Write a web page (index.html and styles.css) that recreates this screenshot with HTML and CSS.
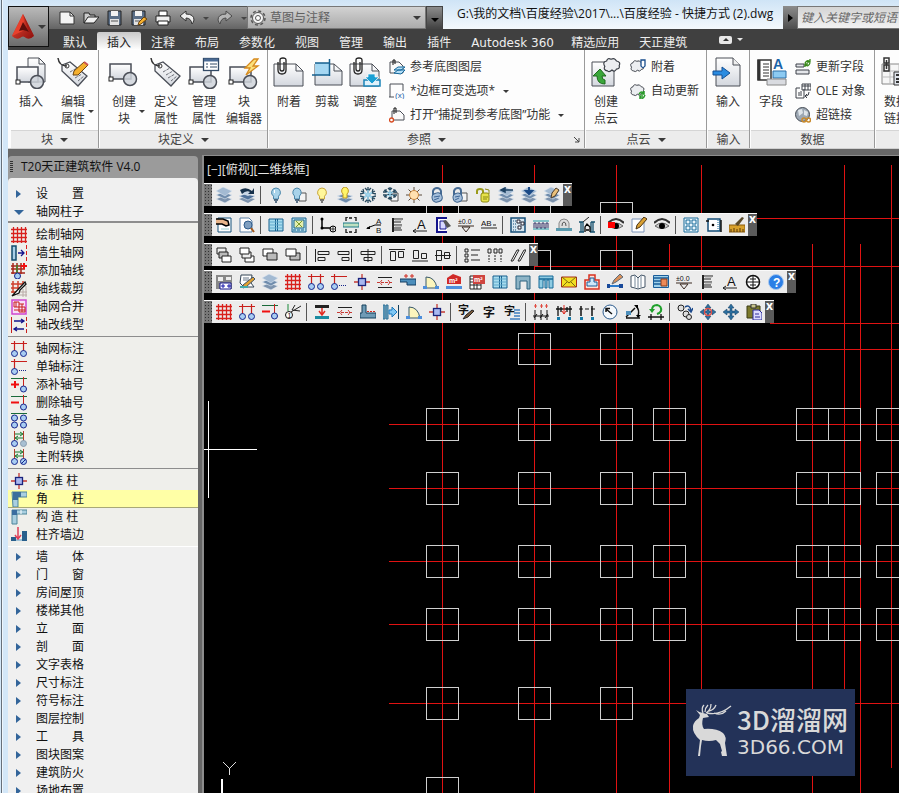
FILE: index.html
```html
<!DOCTYPE html>
<html lang="zh-CN">
<head>
<meta charset="utf-8">
<title>百度经验 - 快捷方式 (2).dwg</title>
<link rel="stylesheet" href="styles.css">
</head>
<body>
<svg class="sprite" aria-hidden="true">
<defs>
<linearGradient id="gPage" x1="0" y1="0" x2="0" y2="1"><stop offset="0" stop-color="#fff"/><stop offset="1" stop-color="#d3d7de"/></linearGradient>
<linearGradient id="gRed" x1="0" y1="0" x2="1" y2="1"><stop offset="0" stop-color="#f0503a"/><stop offset="1" stop-color="#8c0f0c"/></linearGradient>

<!-- toolbar icons, 16 x 16 -->
<symbol id="layers" viewBox="0 0 16 16"><path d="M0 12l7-3 9 3-7 4z" fill="#7d93ad" stroke="#e8eef5" stroke-width=".6"/><path d="M0 8l7-3 9 3-7 4z" fill="#6f8cac" stroke="#e8eef5" stroke-width=".6"/><path d="M0 4l7-4 9 4-7 5z" fill="#a3bad2" stroke="#dfe8f1" stroke-width=".6"/></symbol>
<symbol id="layerswap" viewBox="0 0 16 16"><path d="M0 12l6-2 10 2-7 4z" fill="#7d93ad"/><path d="M0 9l6-2 10 2-7 4z" fill="#4f719a" stroke="#dfe8f1" stroke-width=".6"/><path d="M1 6l6-2 8 2-6 3z" fill="#c8d6e6"/><path d="M1 3q6-4 12 1l2-3v6H9l2-2Q7 3 3 7z" fill="#16304a"/></symbol>
<symbol id="bulb" viewBox="0 0 16 16"><path d="M8 1a4.500 4.500 0 0 0-2.500 8.200V12h5V9.200A4.500 4.500 0 0 0 8 1z" fill="#a8d3ea" stroke="#4a86aa"/><path d="M6 13h4M7 15h2" stroke="#2c4a66" stroke-width="1.500"/><path d="M6.500 3v3" stroke="#fff"/></symbol>
<symbol id="bulbsq" viewBox="0 0 16 16"><path d="M8 6h7v8H8z" fill="#f4f4f4" stroke="#555"/><path d="M6 1a4.500 4.500 0 0 0-2.500 8v3h5V9A4.500 4.500 0 0 0 6 1z" fill="#a8d3ea" stroke="#4a86aa"/><path d="M4 13h4M5 15h2" stroke="#2c4a66" stroke-width="1.500"/></symbol>
<symbol id="bulby" viewBox="0 0 16 16"><path d="M8 1a4.500 4.500 0 0 0-2.500 8.200V12h5V9.200A4.500 4.500 0 0 0 8 1z" fill="#fff79a" stroke="#c9a63c"/><path d="M6 13h4M7 15h2" stroke="#555" stroke-width="1.500"/></symbol>
<symbol id="bulblay" viewBox="0 0 16 16"><path d="M0 9l7-2 9 2-7 3zM0 12l7-2 9 2-7 4z" fill="#6f8cac" stroke="#e4edf5" stroke-width=".6"/><path d="M8 0a4 4 0 0 0-2 7v4h4V7A4 4 0 0 0 8 0z" fill="#fff569" stroke="#c09a22"/></symbol>
<symbol id="snow" viewBox="0 0 16 16"><path d="M8 0v16M1 4l14 8M1 12l14-8M5 1l3 3 3-3M5 15l3-3 3 3M0 7l4-1-1-4M16 7l-4-1 1-4M0 9l4 1-1 4M16 9l-4 1 1 4" fill="none" stroke="#27495f" stroke-width="1.300"/><path d="M8 3v10M4 5.500l8 5M4 10.500l8-5" stroke="#9fd6ee" stroke-width="1.500"/></symbol>
<symbol id="snowsq" viewBox="0 0 16 16"><path d="M8 6h7v8H8z" fill="#f4f4f4" stroke="#555"/><path d="M7 0v13M1 3l12 7M1 10l12-7M5 1l2 2 2-2M5 12l2-2 2 2M0 5l3 0V2M0 8h3v3M14 5h-3V2M14 8h-3v3" fill="none" stroke="#27495f" stroke-width="1.300"/><path d="M7 3v7M4 5l6 4M4 9l6-4" stroke="#9fd6ee" stroke-width="1.500"/></symbol>
<symbol id="sun" viewBox="0 0 16 16"><path d="M8 0v16M0 8h16M2.500 2.500l11 11M13.500 2.500l-11 11" stroke="#5a4a3a"/><circle cx="8" cy="8" r="4.500" fill="#ffe0b0" stroke="#c8863f"/></symbol>
<symbol id="lock" viewBox="0 0 16 16"><path d="M4 9V4q1-3 4-3t4 3v4" fill="none" stroke="#456a93" stroke-width="2"/><rect x="3" y="6" width="10" height="9" rx="4" fill="#a5bfdb" stroke="#3a608b" transform="rotate(-15 8 10)"/><path d="M5 10l6-1M5 13l5-2" stroke="#3f6797"/></symbol>
<symbol id="locksq" viewBox="0 0 16 16"><path d="M8 6h7v8H8z" fill="#f4f4f4" stroke="#555"/><path d="M2 9V4q1-3 4-3t3 3v4" fill="none" stroke="#456a93" stroke-width="2"/><rect x="1" y="6" width="9" height="9" rx="4" fill="#a5bfdb" stroke="#3a608b" transform="rotate(-15 6 10)"/><path d="M3 10l5-1M3 13l4-2" stroke="#3f6797"/></symbol>
<symbol id="unlock" viewBox="0 0 16 16"><path d="M2 7V4q0-2 3-2t3 2v4" fill="none" stroke="#9a9a1a" stroke-width="2"/><rect x="6" y="6" width="8" height="9" rx="2" fill="#e6e24a" stroke="#8d8a12"/><path d="M10 2l4 1v4M8 10h5M8 12h4" stroke="#8d8a12" fill="none"/></symbol>
<symbol id="layleft" viewBox="0 0 16 16"><use href="#layers"/><path d="M15 3H6M7 1L3 3l4 2z" stroke="#1d4163" stroke-width="1.500" fill="#1d4163"/></symbol>
<symbol id="laydown" viewBox="0 0 16 16"><use href="#layers"/><path d="M8 0v4M5 4h6L8 7z" stroke="#1b4a86" stroke-width="2" fill="#1b4a86"/></symbol>
<symbol id="laypen" viewBox="0 0 16 16"><use href="#layers"/><path d="M7 11l1-5 4-5 3 2-4 6z" fill="#e9c07a" stroke="#4a3a2a"/></symbol>
<symbol id="handpage" viewBox="0 0 16 16"><path d="M2 1h13v14H2z" fill="#fff" stroke="#14507a"/><path d="M0 2h7l5 2 1 4-3 1-4-2H0" fill="#e8b48a" stroke="#000" stroke-width="1.500"/><path d="M5 12h8" stroke="#9cc"/></symbol>
<symbol id="pagemag" viewBox="0 0 16 16"><path d="M1 1h9l3 3v11H1z" fill="#fff" stroke="#5a7fa5"/><circle cx="9" cy="8" r="4" fill="#7f9fc0" stroke="#2f5c8c"/><path d="M12 11l3 4" stroke="#a55a1c" stroke-width="2"/></symbol>
<symbol id="win" viewBox="0 0 16 16"><path d="M1 2h14v12H1z" fill="#a8dcee" stroke="#17618f"/><path d="M7.500 2v12M9.500 2v12" stroke="#17618f"/><path d="M2 5h12M2 8h12M2 11h12" stroke="#5fa9cc"/></symbol>
<symbol id="winx" viewBox="0 0 16 16"><path d="M1 1h14v14H1z" fill="#b4dfec" stroke="#17618f"/><path d="M3 3h10v8H3z" fill="#e4eeb0" stroke="#17618f"/><path d="M5 4l6 6M11 4l-6 6" stroke="#7c9a2a"/><path d="M2 13h12" stroke="#17618f" stroke-dasharray="3 1"/></symbol>
<symbol id="poly" viewBox="0 0 16 16"><path d="M2 2v9h8" fill="none" stroke="#000" stroke-width="1.500"/><circle cx="2" cy="2" r="1.500"/><circle cx="2" cy="11" r="1.500"/><circle cx="13" cy="12" r="3" fill="#eee" stroke="#000"/><path d="M10 12h6M13 9v6" stroke="#000" stroke-width=".7"/></symbol>
<symbol id="wallf" viewBox="0 0 16 16"><path d="M0 6h16v4H0z" fill="#bfe0c0" stroke="#1d7a8a"/><path d="M5 0H3v4M11 0h2v4M5 16H3v-4M11 16h2v-4M6 1h3M6 15h3" fill="none" stroke="#111" stroke-width="1.300"/></symbol>
<symbol id="arrA" viewBox="0 0 16 16"><path d="M1 11l8-3h6" fill="none" stroke="#000"/><path d="M0 12l4-3v3z"/><text x="10" y="7" font-size="8">A</text><text x="10" y="16" font-size="8">B</text></symbol>
<symbol id="ladder" viewBox="0 0 16 16"><path d="M4 1v14" stroke="#222" stroke-width="2"/><path d="M4 2h10M4 5h8M4 8h9M4 11h8M4 13h9" stroke="#222"/><path d="M6 3h7M6 9h7" stroke="#999"/></symbol>
<symbol id="Aarr" viewBox="0 0 16 16"><text x="5" y="12" font-size="13">A</text><path d="M1 14h14M4 12l-3 2 3 2" fill="none" stroke="#222"/></symbol>
<symbol id="ins" viewBox="0 0 16 16"><path d="M12 1H2v14h10" fill="#fff" stroke="#14148c" stroke-width="2"/><path d="M5 4h6v8H5z" fill="#d8d8ff" stroke="#14148c"/><path d="M8 4l3-1 5 6-4 2z" fill="#555"/></symbol>
<symbol id="level" viewBox="0 0 16 16"><text x="0" y="7" font-size="7">±0.0</text><path d="M0 9h16M4 10h8l-4 5z" fill="none" stroke="#3a2a22"/></symbol>
<symbol id="AB" viewBox="0 0 16 16"><text x="0" y="9" font-size="8">AB</text><path d="M0 11h16M12 8h3" stroke="#222"/></symbol>
<symbol id="sheet" viewBox="0 0 16 16"><path d="M1 1h14v14H1z" fill="#d6e6f0" stroke="#134c77" stroke-width="1.500"/><path d="M3 4h3M3 7h3M3 10h3M3 13h3" stroke="#134c77" stroke-dasharray="1 1"/><path d="M7 3h3v3H7zM11 5h3v3h-3zM8 9h3v3H8z" fill="#fff" stroke="#223"/></symbol>
<symbol id="wave" viewBox="0 0 16 16"><path d="M0 4h16M0 12h16" stroke="#1a9aa5"/><path d="M1 11V6h2v5h2V6h2v5h2V6h2v5h2V6h2v5" fill="none" stroke="#336"/></symbol>
<symbol id="arch" viewBox="0 0 16 16"><path d="M3 12V6q1-4 5-4t5 4v6z" fill="#ddd" stroke="#888"/><path d="M6 9q0-4 2-4t2 4" fill="none" stroke="#555"/><path d="M0 11h16v3H0z" fill="#5a9aae"/></symbol>
<symbol id="door" viewBox="0 0 16 16"><path d="M0 5h4M2 5v10M4 5v10M0 15h5M16 5h-4M14 5v10M12 5v10M16 15h-5" fill="none" stroke="#14506e" stroke-width="1.300"/><path d="M6 15v-5l2-3 3 3v5M7 13h3" fill="none" stroke="#000" stroke-width="1.300"/><path d="M4 5l6-5" fill="none" stroke="#222"/></symbol>
<symbol id="eye" viewBox="0 0 16 16"><path d="M0 6q8-8 16 0" fill="none" stroke="#333" stroke-width="2"/><path d="M1 9q7-6 14 0-7 5-14 0z" fill="#ccc" stroke="#666"/><circle cx="8" cy="9" r="3"/></symbol>
<symbol id="eyered" viewBox="0 0 16 16"><use href="#eye"/><path d="M0 5h7v6H0z" fill="#f00"/></symbol>
<symbol id="note" viewBox="0 0 16 16"><path d="M1 2h12v13H1z" fill="#fff" stroke="#7a93b8"/><path d="M5 12l1-4 7-8 3 2-7 8z" fill="#d9a033" stroke="#4a3314"/></symbol>
<symbol id="grid4" viewBox="0 0 16 16"><path d="M1 1h14v14H1zM3 3h4v4H3zM9 3h4v4H9zM3 9h4v4H3zM9 9h4v4H9z" fill="#eaf5fb" stroke="#176a99"/></symbol>
<symbol id="pagedot" viewBox="0 0 16 16"><path d="M2 2h12v12H2z" fill="#fff" stroke="#134c77" stroke-width="1.500"/><path d="M0 4h3M15 3v12" stroke="#111" stroke-width="1.500"/><circle cx="7" cy="8" r="1.300"/><path d="M12 3v11" stroke="#176a99" stroke-dasharray="1 1"/></symbol>
<symbol id="ruler" viewBox="0 0 16 16"><path d="M0 8h16v7H0z" fill="#d8a12c" stroke="#8a5c10"/><path d="M2 15v-3M5 15v-4M8 15v-3M11 15v-4M14 15v-3" stroke="#5a3a08"/><path d="M6 7l7-7 2 1-6 8z" fill="#5a4a2a"/></symbol>
<symbol id="ov1" viewBox="0 0 16 16"><path d="M1 1h9v6H1z" fill="#eee" stroke="#222"/><path d="M3 5h9v6H3z" fill="#bbb" stroke="#222"/><path d="M6 9h9v6H6z" fill="#fff" stroke="#222"/></symbol>
<symbol id="ov2" viewBox="0 0 16 16"><path d="M6 9h9v6H6z" fill="#fff" stroke="#222"/><path d="M3 5h9v6H3z" fill="#eee" stroke="#222"/><path d="M1 1h9v6H1z" fill="#fff" stroke="#222"/></symbol>
<symbol id="ov3" viewBox="0 0 16 16"><path d="M1 2h10v7H1z" fill="#fff" stroke="#222"/><path d="M5 6h10v7H5z" fill="#bbb" stroke="#222"/></symbol>
<symbol id="ov4" viewBox="0 0 16 16"><path d="M5 6h10v7H5z" fill="#bbb" stroke="#222"/><path d="M1 2h10v7H1z" fill="#fff" stroke="#222"/></symbol>
<symbol id="alL" viewBox="0 0 16 16"><path d="M1.500 2v13M4 4.500h11v3H4zM4 10.500h7v3H4z" fill="none" stroke="#222"/></symbol>
<symbol id="alR" viewBox="0 0 16 16"><path d="M14.500 2v13M1 4.500h11v3H1zM5 10.500h7v3H5z" fill="none" stroke="#222"/></symbol>
<symbol id="alC" viewBox="0 0 16 16"><path d="M8 2v13M1 4.500h14v3H1zM4 10.500h8v3H4z" fill="none" stroke="#222"/></symbol>
<symbol id="alT" viewBox="0 0 16 16"><path d="M0 2.500h16M1.500 4.500h5v9h-5zM9.500 4.500h5v6h-5z" fill="none" stroke="#222"/></symbol>
<symbol id="alB" viewBox="0 0 16 16"><path d="M0 14h16M1.500 3.500h5v8h-5zM9.500 6.500h5v5h-5z" fill="none" stroke="#222"/></symbol>
<symbol id="alM" viewBox="0 0 16 16"><path d="M0 8.500h16M1.500 3.500h5v10h-5zM9.500 5.500h5v6h-5z" fill="none" stroke="#222"/></symbol>
<symbol id="list" viewBox="0 0 16 16"><path d="M1 2h3v3H1zM1 7h3v3H1zM1 12h3v3H1zM7 3h9M7 8h7M7 13h9" fill="none" stroke="#222"/></symbol>
<symbol id="dist" viewBox="0 0 16 16"><path d="M1 2h3v4H1zM7 2h3v4H7zM12 2h3v4h-3z" fill="none" stroke="#222"/><path d="M2 8v7M8 8v7M14 8v7" stroke="#222" stroke-dasharray="2 1"/></symbol>
<symbol id="slash" viewBox="0 0 16 16"><path d="M1 14L7 3h2L3 14zM8 14l6-11h2l-6 11z" fill="#fff" stroke="#222"/></symbol>
<symbol id="setup" viewBox="0 0 16 16"><path d="M0 1h16v14H0z" fill="#888"/><path d="M2 3h5v4H2zM10 3h5v3h-5z" fill="#eee"/><path d="M4 9h11v6H4z" fill="#fff" stroke="#14148c"/><path d="M5 12h4M7 10v4M11 12h4M13 10v4" stroke="#1414aa"/></symbol>
<symbol id="edit" viewBox="0 0 16 16"><path d="M2 1h11l-1 8 3 4H5L1 9z" fill="#fff" stroke="#345"/><path d="M4 4h6M4 6h6" stroke="#678"/><path d="M4 11l10-8 2 2L7 13l-3 1z" fill="#e0a030" stroke="#456"/><path d="M1 13h8" stroke="#4aa" stroke-width="2"/></symbol>
<symbol id="grid" viewBox="0 0 16 16"><path d="M2.500 0v16M6.500 0v16M10.500 0v16M14.500 0v16M0 2.500h16M0 6.500h16M0 10.500h16M0 14.500h16" stroke="#d8201c" stroke-width="1.300"/></symbol>
<symbol id="axes2" viewBox="0 0 16 16"><path d="M0 2.500h16M3.500 0v10M12.500 0v10" stroke="#c8201c" stroke-width="1.200"/><circle cx="3.500" cy="12.500" r="3" fill="#a8cdf2" stroke="#15258c"/><circle cx="12.500" cy="12.500" r="3" fill="#a8cdf2" stroke="#15258c"/></symbol>
<symbol id="axis1" viewBox="0 0 16 16"><path d="M0 2.500h16M3.500 0v10" stroke="#c8201c" stroke-width="1.200"/><circle cx="3.500" cy="12.500" r="3" fill="#a8cdf2" stroke="#15258c"/><path d="M8 11.500h8" stroke="#15258c" stroke-dasharray="1 1"/></symbol>
<symbol id="axplus" viewBox="0 0 16 16"><path d="M0 1.500h16" stroke="#1a6a3a"/><path d="M12.500 0v10" stroke="#c8201c"/><path d="M0 7.500h8M4 4v7" stroke="#f01010" stroke-width="2"/><circle cx="12.500" cy="12" r="3" fill="#a8cdf2" stroke="#15258c"/></symbol>
<symbol id="axminus" viewBox="0 0 16 16"><path d="M0 1.500h16" stroke="#1a6a3a"/><path d="M12.500 0v10" stroke="#c8201c"/><path d="M0 7.500h8" stroke="#f01010" stroke-width="2"/><circle cx="12.500" cy="12" r="3" fill="#a8cdf2" stroke="#15258c"/></symbol>
<symbol id="ax4" viewBox="0 0 16 16"><path d="M0 .5h16" stroke="#1a6a3a"/><g fill="#a8cdf2" stroke="#15258c"><circle cx="3.500" cy="5" r="3"/><circle cx="12.500" cy="5" r="3"/><circle cx="3.500" cy="12" r="3"/><circle cx="12.500" cy="12" r="3"/></g></symbol>
<symbol id="axhide" viewBox="0 0 16 16"><path d="M3.500 0v10M12.500 0v10" stroke="#b0402c"/><path d="M4 3h7M9 1l3 2-3 2M12 7H5M7 5L4 7l3 2" fill="none" stroke="#127a2c"/><circle cx="3.500" cy="12.500" r="3" fill="#a8cdf2" stroke="#15258c"/><circle cx="12.500" cy="12.500" r="3" fill="#a9c0d2" stroke="#8a9cae"/></symbol>
<symbol id="axswap" viewBox="0 0 16 16"><path d="M3.500 0v10M12.500 0v10" stroke="#b0402c"/><path d="M4 3h7M9 1l3 2-3 2M12 7H5M7 5L4 7l3 2" fill="none" stroke="#127a2c"/><circle cx="3.500" cy="12.500" r="3" fill="#a8cdf2" stroke="#15258c"/><circle cx="12.500" cy="12.500" r="3" fill="#a8cdf2" stroke="#15258c"/><path d="M10 15l5-5" stroke="#15258c"/></symbol>
<symbol id="cross" viewBox="0 0 16 16"><path d="M0 8h16M8 0v16" stroke="#c43a34" stroke-width="1.300"/><rect x="4.500" y="4.500" width="7" height="7" fill="#a9b8f0" stroke="#1a237c" stroke-width="1.300"/></symbol>
<symbol id="dim" viewBox="0 0 16 16"><path d="M1 3.500h14M1 13.500h14" stroke="#222"/><path d="M0 8.500h16M5 6L3 8.500 5 11M11 6l2 2.500L11 11" fill="none" stroke="#c83a34" stroke-dasharray="3 1"/></symbol>
<symbol id="wall" viewBox="0 0 16 16"><path d="M0 5h16v6H7V8H0z" fill="#4d8fbc" stroke="#143c60"/><path d="M6 0v4M12 0v4M4 2h4M10 2h4" stroke="#d02a20"/></symbol>
<symbol id="arc" viewBox="0 0 16 16"><path d="M3 14V3q9 0 11 11z" fill="#fdf6bd" stroke="#3a5a6a"/><path d="M0 12h4v3H0zM12 12h4v3h-4z" fill="#4d8fdc"/></symbol>
<symbol id="m2" viewBox="0 0 16 16"><path d="M1 4l6-4 8 3v7H1z" fill="#d02a28"/><text x="3" y="9" font-size="7" class="inv">m²</text><path d="M0 12h16v3H0z" fill="#4d8fdc"/></symbol>
<symbol id="m2t" viewBox="0 0 16 16"><path d="M1 2h11v13H1z" fill="#fff" stroke="#222"/><path d="M1 5h11M1 8h11M1 11h11M5 2v13M8 2v13" stroke="#222"/><path d="M4 1h12v9H4z" fill="#cf4540"/><text x="5" y="8" font-size="7" class="inv">m²</text></symbol>
<symbol id="corner" viewBox="0 0 16 16"><path d="M1 1h15v5H7v10H2z" fill="#a9cfe0" stroke="#4d8599"/><path d="M2 1h8v5H7v3H2z" fill="#3c6f9c"/></symbol>
<symbol id="corner2" viewBox="0 0 16 16"><path d="M1 1h15v4H6v10H1z" fill="#a9cfe0" stroke="#4d8599"/><path d="M1 1h5v5H1z" fill="#3a6ea0"/><path d="M10 1v4" stroke="#fff"/></symbol>
<symbol id="tee" viewBox="0 0 16 16"><path d="M1 2h14v12h-4V6H9v8H7V6H5v8H1z" fill="#8ecbe2" stroke="#176a99"/><path d="M1 5h14" stroke="#176a99" stroke-width="1.500"/></symbol>
<symbol id="portal" viewBox="0 0 16 16"><path d="M1 2h14v13h-3V7H5v8H1z" fill="#8db4c6" stroke="#2a6380"/></symbol>
<symbol id="mail" viewBox="0 0 16 16"><path d="M.5 3h15v10H.5z" fill="#f2df22" stroke="#a83018"/><path d="M1 3l7 6 7-6M1 13l5-5M15 13l-5-5" fill="none" stroke="#7a6a10"/></symbol>
<symbol id="house" viewBox="0 0 16 16"><path d="M5 1h6v5h4v9H1V6h4z" fill="#ffe2d8" stroke="#d83020" stroke-width="1.500"/><path d="M6 8V4h4v4h3v4H3V8z" fill="#cfe6f7" stroke="#1a5d9a"/></symbol>
<symbol id="brush" viewBox="0 0 16 16"><path d="M0 12h16" stroke="#2a7acc" stroke-width="2"/><path d="M0 10h3v4H0zM12 10h4v4h-4z" fill="#1a4a9a"/><path d="M5 10l2-4 6-6 3 3-7 5z" fill="#d8905a" stroke="#5a6a7a"/></symbol>
<symbol id="book" viewBox="0 0 16 16"><path d="M1 2l4-1 3 3 3-3 4 1v11l-4 1-3 1-3-1-4-1z" fill="#fff" stroke="#456"/><path d="M5 1v12M8 4v11M11 1v12" stroke="#789"/></symbol>
<symbol id="table" viewBox="0 0 16 16"><path d="M.5 1.500h15v12H.5z" fill="#9fd0ea" stroke="#1a5d9a"/><path d="M1 4h14M1 7h7M1 10h7" stroke="#1a5d9a" stroke-width="1.500"/><path d="M8 5h6v7H8z" fill="#ee8a58" stroke="#8a3a1a"/></symbol>
<symbol id="wheel" viewBox="0 0 16 16"><circle cx="8" cy="8" r="6.500" fill="#fff" stroke="#111" stroke-width="1.500"/><path d="M1 8h14M8 1v14M5 5h6M5 11h6" stroke="#111"/></symbol>
<symbol id="help" viewBox="0 0 16 16"><circle cx="8" cy="8" r="7.500" fill="#2b7fe6" stroke="#a9c8ee"/><text x="5" y="12.500" font-size="12" class="inv">?</text></symbol>
<symbol id="onearr" viewBox="0 0 16 16"><circle cx="4" cy="11" r="3.500" fill="#fff" stroke="#111"/><text x="2.500" y="14" font-size="7">1</text><path d="M3 0v7" stroke="#1a8a3a"/><path d="M6 8l10-6M10 1L7 6l8 1" fill="none" stroke="#222"/></symbol>
<symbol id="wdown" viewBox="0 0 16 16"><path d="M1 1h14v3H1z" fill="#222"/><path d="M1 12h14v3H1z" fill="#1a8aa0"/><path d="M8 4v6M5 7l3 4 3-4" fill="none" stroke="#e02a20" stroke-width="1.500"/></symbol>
<symbol id="Lwall" viewBox="0 0 16 16"><path d="M2 1h4v8h10v5H0V9h2z" fill="#6f9bb5" stroke="#14405c"/><path d="M7 7.500h9" stroke="#d02a20" stroke-dasharray="2 1"/></symbol>
<symbol id="colarr" viewBox="0 0 16 16"><path d="M0 1h2v14H0zM3 1h2v14H3z" fill="#7ab0cc" stroke="#2c6f94"/><path d="M15.500 1v14" stroke="#14405c"/><path d="M6 6h3V3l5 5-5 5v-3H6z" fill="#7ec7f4" stroke="#1a78bc"/></symbol>
<symbol id="zi" viewBox="0 0 16 16"><text x="2" y="13" font-size="12" font-weight="700">字</text></symbol>
<symbol id="zibr" viewBox="0 0 16 16"><text x="0" y="10" font-size="11" font-weight="700">字</text><path d="M5 15l3-4 6-5 2 1-6 6z" fill="#7a5a3a" stroke="#222"/></symbol>
<symbol id="zil" viewBox="0 0 16 16"><text x="0" y="11" font-size="11" font-weight="700">字</text><path d="M10 6h6M10 9h6M10 12h6M6 15h10" stroke="#3f7fc0" stroke-width="1.500"/></symbol>
<symbol id="d1" viewBox="0 0 16 16"><path d="M0 12h16M2 6v10M8 6v10M14 6v10M1 14l3-4M7 14l3-4M12 14l3-4" stroke="#111"/><path d="M1 2h3M7 2h3M12 2h3M2.500 0v4M8.500 0v4M13.500 0v4" stroke="#e04a40"/></symbol>
<symbol id="d2" viewBox="0 0 16 16"><path d="M0 5h16M2 2v10M14 2v10M5 3v5M11 3v5" stroke="#111" stroke-width="1.300"/><path d="M8 1v9M6 7l2 3 2-3" fill="none" stroke="#e02a20"/><path d="M1 13h3v3H1zM12 13h3v3h-3z" fill="#167aa8"/></symbol>
<symbol id="d3" viewBox="0 0 16 16"><path d="M0 5h16" stroke="#111" stroke-dasharray="4 2"/><path d="M2 2v10M13 2v10" stroke="#111" stroke-width="1.500"/><path d="M1 13h3v3H1zM12 13h3v3h-3z" fill="#167aa8"/></symbol>
<symbol id="clock" viewBox="0 0 16 16"><circle cx="8" cy="8" r="7" fill="#f4f8fc" stroke="#2a5a8c"/><path d="M10 10L4 5M4 8V4.500h4" fill="none" stroke="#111" stroke-width="1.500"/></symbol>
<symbol id="angle" viewBox="0 0 16 16"><path d="M1 14h14M1 13L10 4M11 2q4 4 2 10" fill="none" stroke="#111" stroke-width="1.500"/><path d="M1 7h5v4H1z" fill="#4d8fbc"/><path d="M9 1h4v4zM11 11h5l-3 3z"/></symbol>
<symbol id="redo2" viewBox="0 0 16 16"><path d="M4 6q0-5 5-5 5 1 4 6-1 2-4 3" fill="none" stroke="#1fa02c" stroke-width="2"/><path d="M1 5h6L4 9z" fill="#1fa02c"/><path d="M0 13h16M3 10v6M13 10v6" stroke="#111" stroke-width="1.300"/></symbol>
<symbol id="copies" viewBox="0 0 16 16"><circle cx="4" cy="4" r="3" fill="#ddd" stroke="#222"/><circle cx="9" cy="10" r="3" fill="#ddd" stroke="#222"/><circle cx="12" cy="13" r="2.500" fill="#ddd" stroke="#222"/><path d="M8 3q5-3 6 4M11 5l3 3 2-4" fill="none" stroke="#1c4a8c" stroke-width="1.500"/></symbol>
<symbol id="move" viewBox="0 0 16 16"><path d="M8 0l3 4H9v3h3V5l4 3-4 3V9H9v3h2l-3 4-3-4h2V9H4v2L0 8l4-3v2h3V4H5z" fill="#2c6f9e" stroke="#173f60" stroke-width=".5"/></symbol>
<symbol id="mover" viewBox="0 0 16 16"><use href="#move"/><circle cx="8" cy="8" r="3.500" fill="none" stroke="#e05048" stroke-width="1.500"/></symbol>
<symbol id="paste" viewBox="0 0 16 16"><path d="M1 2h13v12H1z" fill="#7c7a2c" stroke="#3a3a14"/><path d="M5 0h5v4H5z" fill="#c8c48a" stroke="#333"/><path d="M7 6h6l3 3v7H7z" fill="#dcdcff" stroke="#2a2a9a"/><path d="M9 10h4M9 13h5" stroke="#2a2a9a"/></symbol>

<!-- palette-only icons -->
<symbol id="wallgen" viewBox="0 0 16 16"><path d="M1 1h4v14H1z" fill="#a9cfe6" stroke="#134c6e" stroke-width="1.500"/><path d="M7 8h6M10 5l3 3-3 3" fill="none" stroke="#14148c" stroke-width="1.300"/><path d="M15.500 0v16" stroke="#d8201c" stroke-dasharray="4 2"/></symbol>
<symbol id="addline" viewBox="0 0 16 16"><path d="M2 0v11M6 0v11M10 0v11M0 3h16M0 6h14M0 10h14" stroke="#a8281c" stroke-width="1.500"/><path d="M10 3h6M13 0v6" stroke="#f01010" stroke-width="2"/><path d="M6 2v8" stroke="#3a8a2a" stroke-width="1.500"/><circle cx="6.500" cy="13" r="3" fill="#a8cdf2" stroke="#15258c"/></symbol>
<symbol id="trim" viewBox="0 0 16 16"><path d="M2 0v12M7 0v8M12 0v5M0 3h14M0 7h9M0 11h6" stroke="#d0402c" stroke-width="1.500"/><path d="M12 8v8M15 5v11M6 14h10M9 11h7" stroke="#b9aaa6"/><path d="M1 15L14 1l1 2-6 6-1 3z" fill="#fff" stroke="#111" stroke-width="1.300"/></symbol>
<symbol id="merge" viewBox="0 0 16 16"><path d="M1 1h14v14H1z" fill="#f8dff8" stroke="#d048d0" stroke-width="1.500"/><path d="M3 3h5v5H3zM8 8h6v5H8zM5 3v5M11 5v8M3 11h11M8 5h5" fill="none" stroke="#c8201c"/></symbol>
<symbol id="ltype" viewBox="0 0 16 16"><path d="M.5 0v16" stroke="#c8201c"/><path d="M15.500 0v16" stroke="#c8201c" stroke-dasharray="4 2"/><path d="M3 4h9M10 2l3 2-3 2M13 12H4M6 10l-3 2 3 2" fill="none" stroke="#14148c" stroke-width="1.300"/></symbol>
<symbol id="walledge" viewBox="0 0 16 16"><path d="M0 10h5v4H0zM11 4h5v10h-5z" fill="#285f8c"/><path d="M5 12h6v2H5z" fill="#9ec4da"/><path d="M7 0v11M4 8l3 4 3-4" fill="none" stroke="#e04058" stroke-width="1.500"/></symbol>

<!-- ribbon icons -->
<symbol id="block" viewBox="0 0 32 32"><rect x="2" y="7" width="21" height="15" fill="url(#gPage)" stroke="#4a4e57" stroke-width="1.500"/><rect x="1" y="20" width="4" height="4" fill="#fff" stroke="#222"/><circle cx="22" cy="22" r="6.500" fill="#cfd3da" fill-opacity=".85" stroke="#4a4e57" stroke-width="1.500"/></symbol>
<symbol id="tag" viewBox="0 0 32 32"><path d="M5 8l8-3 17 14-9 10L5 14z" fill="url(#gPage)" stroke="#4a4e57" stroke-width="1.300"/><circle cx="10" cy="9" r="2" fill="#fff" stroke="#333"/><path d="M1 1q1 8 9 8" fill="none" stroke="#333" stroke-width="1.500"/><path d="M13 15l7-4M16 18l7-4M18 21l7-4M21 24l6-5" stroke="#6a6e77" stroke-dasharray="3 1"/></symbol>
<symbol id="rInsert" viewBox="0 0 32 32"><path d="M13 1h11l6 6v18H13z" fill="url(#gPage)" stroke="#4a4e57"/><path d="M24 1v6h6" fill="none" stroke="#4a4e57"/><use href="#block" y="3" width="32" height="32"/></symbol>
<symbol id="rTagPen" viewBox="0 0 32 32"><use href="#tag"/><path d="M16 18l1-4L27 5l4 3-10 10z" fill="#f5b02e" stroke="#6a4310"/><path d="M27 5l4 3" stroke="#c55" stroke-width="2"/></symbol>
<symbol id="rManage" viewBox="0 0 32 32"><use href="#block" y="3" width="32" height="32"/><rect x="15.500" y="1.500" width="15" height="12" fill="#fff" stroke="#334a66" stroke-width="1.300"/><path d="M16 3h14" stroke="#4a6a94" stroke-width="3"/><path d="M18 7h2M22 7h7M18 10h2M22 10h7" stroke="#334a66"/></symbol>
<symbol id="rEditor" viewBox="0 0 32 32"><use href="#block" y="3" width="32" height="32"/><path d="M26 2l-9 9h5l-4 7 12-9h-5l5-7z" fill="#fbe07a" stroke="#d68a1e" stroke-width="1.300"/></symbol>
<symbol id="clip" viewBox="0 0 12 18"><path d="M2 5v8q0 4 4 4t4-4V3q0-2-3-2T4 3v9q0 2 2 2t2-2V5" fill="none" stroke="#222" stroke-width="1.300"/></symbol>
<symbol id="rAttach" viewBox="0 0 32 32"><path d="M1 7h22l7 7v15H1z" fill="url(#gPage)" stroke="#4a4e57"/><path d="M23 7v7h7" fill="none" stroke="#4a4e57"/><use href="#clip" x="3" width="12" height="18"/></symbol>
<symbol id="rCrop" viewBox="0 0 32 32"><path d="M4 7h19l8 7v14H4z" fill="url(#gPage)" stroke="#4a4e57"/><path d="M23 7v7h8" fill="none" stroke="#4a4e57"/><path d="M4 6h14v12H4z" fill="#a5d7f2"/><path d="M1 18h18M18.500 2v17M4 6h14" stroke="#16608f" stroke-width="1.500"/></symbol>
<symbol id="rAdjust" viewBox="0 0 32 32"><use href="#rAttach"/><path d="M15 23h16v6H15z" fill="#dff1fb" stroke="#1a84b8" stroke-width="1.500"/><path d="M19 17h7v3h4l-7 7-7-7h3z" fill="#1a9fd4" stroke="#fff" stroke-width=".7"/></symbol>
<symbol id="cloud" viewBox="0 0 20 18"><path d="M5 15q-5-1-3-5-3-5 2-6 1-4 5-2 4-2 6 2 5 1 3 5 1 4-3 4-2 4-5 1-3 3-5 1z" fill="#eceef1" stroke="#3c4048" stroke-width="1.300"/></symbol>
<symbol id="rCloud" viewBox="0 0 32 32"><path d="M2 5h22v24H2z" fill="url(#gPage)" stroke="#4a4e57"/><use href="#cloud" x="13" y="0" width="18" height="17"/><path d="M10 12l-7 7h4q0 8 8 8v-4q-3 0-3-4h4z" fill="#3aa63a" stroke="#1c6a1c"/></symbol>
<symbol id="rImport" viewBox="0 0 32 32"><path d="M4 1h17l7 7v21H4z" fill="url(#gPage)" stroke="#4a4e57"/><path d="M21 1v7h7" fill="#eee" stroke="#4a4e57"/><path d="M1 14h9v-4l8 6-8 6v-4H1z" fill="#2a8be0" stroke="#124f94"/></symbol>
<symbol id="rField" viewBox="0 0 32 32"><path d="M3 3h13v20H3z" fill="#fff" stroke="#333" stroke-width="1.500"/><path d="M4 3v20" stroke="#333" stroke-width="3"/><path d="M8 7h6M8 10h6M8 13h6M8 16h6M8 19h6" stroke="#333"/><text x="18" y="12" font-size="14" font-weight="700" class="blue">A</text><path d="M18 14h13v7H18z" fill="#8ccaf2" stroke="#2a6fa8"/><path d="M12 22h19v6H12z" fill="#d9dbe0" stroke="#888"/></symbol>
<symbol id="rLink" viewBox="0 0 32 32"><path d="M2 7h26v20H2z" fill="#f6f6f6" stroke="#888"/><path d="M2 14h26M2 20h26M10 7v20M19 7v20" stroke="#bbb"/><path d="M4 1h5v5H4zM4 8h5v6H4zM6.500 3v9" fill="none" stroke="#333" stroke-width="1.500"/><path d="M14 15h12v13H14z" fill="#dfe3ea" stroke="#333"/><path d="M16 18h8M16 22h3M21 22h3M16 25h3M21 25h3" stroke="#333" stroke-width="2"/></symbol>
<symbol id="sUnder" viewBox="0 0 16 16"><path d="M1 3h9l4 4v7H1z" fill="#fafafa" stroke="#4a4e57"/><path d="M4 6V1h2v4" fill="none" stroke="#111"/><path d="M5 11l4-3h7l-4 3zM5 14l4-3h7l-4 4z" fill="#b4def6" stroke="#14689c"/></symbol>
<symbol id="sFrame" viewBox="0 0 16 16"><path d="M1 14V1h13v7" fill="none" stroke="#4a4e57"/><path d="M0 14h5" stroke="#4a4e57"/><text x="6" y="15" font-size="8" class="blue">(x)</text></symbol>
<symbol id="sSnap" viewBox="0 0 16 16"><path d="M3 4h8l4 4v5H3z" fill="#fafafa" stroke="#4a4e57"/><path d="M5 7V1h2v5" fill="none" stroke="#111"/><circle cx="2.500" cy="13" r="2" fill="#fff" stroke="#d84a20" stroke-width="1.300"/></symbol>
<symbol id="sCloudA" viewBox="0 0 16 16"><use href="#cloud" width="15" height="15"/><path d="M11 1v6q2 3 4 0V1z" fill="#fff" stroke="#174c8c" stroke-width="1.300"/></symbol>
<symbol id="sCloudU" viewBox="0 0 16 16"><use href="#cloud" width="15" height="15"/><path d="M9 11q3-4 5 0M15 12q-2 5-5 2M14 8v3h-3M10 16v-3h3" fill="none" stroke="#2a9a2a" stroke-width="1.500"/></symbol>
<symbol id="sUpd" viewBox="0 0 16 16"><path d="M1 5h8v3H1zM1 11h13v4H1z" fill="#e4e6ea" stroke="#3c4048"/><path d="M10 4q3-4 5-1M15 4q-2 5-5 1M15 0v3h-3M10 8V5h3" fill="none" stroke="#3a8a1a" stroke-width="1.300"/></symbol>
<symbol id="sOle" viewBox="0 0 16 16"><path d="M7 1h9v6H7z" fill="#fff" stroke="#3c4048"/><path d="M7 3h9M10 1v6M13 1v6M1 5h4M1 5v10h8V6M4 13V9M6 13V8" fill="none" stroke="#3c4048"/><path d="M14 9q0 4-3 4M12 11l-2 2 2 2" fill="none" stroke="#3c4048"/></symbol>
<symbol id="sHyper" viewBox="0 0 16 16"><circle cx="7.500" cy="7.500" r="7" fill="#9da8b4" stroke="#454c55"/><path d="M3 3l4-1 1 4-4 3zM9 3l4 2-1 4-3-1z" fill="#dfe5ea"/><circle cx="9" cy="13" r="2" fill="none" stroke="#c98a2c" stroke-width="1.500"/><circle cx="13.500" cy="13" r="2" fill="none" stroke="#c98a2c" stroke-width="1.500"/></symbol>

<!-- quick access icons -->
<symbol id="qNew" viewBox="0 0 16 16"><path d="M1 2h10l4 4v8H1z" fill="#f4f4f4" stroke="#333"/><path d="M11 2v4h4" fill="none" stroke="#333"/></symbol>
<symbol id="qOpen" viewBox="0 0 16 16"><path d="M1 13V3h5l1 2h5v2" fill="#ccc" stroke="#222"/><path d="M1 13l4-6h11l-5 6z" fill="#f0f0f0" stroke="#222"/></symbol>
<symbol id="qSave" viewBox="0 0 16 16"><path d="M1 1h13v14H1z" fill="#5b6f88" stroke="#222"/><path d="M4 1h7v5H4z" fill="#f2f2f2"/><path d="M3 9h9v6H3z" fill="#e2e2e2"/><path d="M4 11h7" stroke="#555"/></symbol>
<symbol id="qSaveAs" viewBox="0 0 16 16"><use href="#qSave"/><path d="M7 15l1-3 5-5 3 2-6 5z" fill="#f5b02e" stroke="#6a4310"/></symbol>
<symbol id="qPrint" viewBox="0 0 16 16"><path d="M4 1h8v5H4z" fill="#fff" stroke="#222"/><path d="M1 6h14v6H1z" fill="#eee" stroke="#222"/><path d="M3 11h10v4H3z" fill="#fff" stroke="#222"/></symbol>
<symbol id="qUndo" viewBox="0 0 16 16"><path d="M1 6l6-5v3q8 0 8 6-1 3-2 4-1-6-6-6v3z" fill="#eee" stroke="#333"/></symbol>
<symbol id="qRedo" viewBox="0 0 16 16"><path d="M15 6L9 1v3Q1 4 1 10q1 3 2 4 1-6 6-6v3z" fill="#b5b5b5" stroke="#4a4a4a"/></symbol>
<symbol id="gear" viewBox="0 0 16 16"><circle cx="8" cy="8" r="7" fill="none" stroke="#555" stroke-width="1.500" stroke-dasharray="3 2.500"/><circle cx="8" cy="8" r="5.500" fill="#f4f4f4" stroke="#555"/><circle cx="8" cy="8" r="2.500" fill="#fff" stroke="#555"/></symbol>

<symbol id="logo" viewBox="0 0 24 26"><path d="M12 0L1 22q4 4 8 2 3-3 6 0 4 2 8-2z" fill="url(#gRed)"/><path d="M12 0l2 16-13 6z" fill="#e8402c"/><path d="M12 8l-4 9q5-2 10 1z" fill="#5d0f0c"/><path d="M12 0l11 22-5-4z" fill="#a01a14"/></symbol>
<symbol id="deer" viewBox="0 0 40 52"><path d="M4 6q4 3 7 3l4 1 2 3-6 1q-2 7 1 11 12-1 19 4 4 4 2 10l2 13h-5l-1-4 1-1-2-7-4-4q-7 2-14 0l-1 6-1 10H6l2-16Q0 29 1 22q1-5 6-8l1-3z"/><path d="M11 9Q9 4 12 1M13 8q0-4 3-7M14 9q5-3 5-9M15 9q12 3 24-7M17 7q5-1 7-6M22 9q7 3 12-2" fill="none" stroke="#d9d9d9" stroke-width="1.300"/></symbol>
</defs>
</svg>

<div class="window">
  <header class="top">
    <button class="app" aria-label="应用程序菜单"><svg class="logo"><use href="#logo"/></svg><span class="caret"></span></button>
    <div class="topmain">
      <div class="titlebar">
        <div class="quick">
          <button aria-label="新建"><svg><use href="#qNew"/></svg></button>
          <button aria-label="打开"><svg><use href="#qOpen"/></svg></button>
          <button aria-label="保存"><svg><use href="#qSave"/></svg></button>
          <button aria-label="另存为"><svg><use href="#qSaveAs"/></svg></button>
          <button aria-label="打印"><svg><use href="#qPrint"/></svg></button>
          <button aria-label="放弃"><svg><use href="#qUndo"/></svg></button>
          <span class="caret dim"></span>
          <button aria-label="重做"><svg><use href="#qRedo"/></svg></button>
          <span class="caret dim"></span>
        </div>
        <div class="workspace"><svg class="i"><use href="#gear"/></svg><select aria-label="工作空间"><option>草图与注释</option></select><span class="caret"></span></div>
        <button class="qmore" aria-label="自定义快速访问工具栏"><span class="caret"></span></button>
        <h1 class="doc">G:\我的文档\百度经验\2017\...\百度经验 - 快捷方式 (2).dwg</h1>
        <button class="expand" aria-label="展开搜索"><span></span></button>
        <input class="search" type="text" aria-label="搜索" placeholder="键入关键字或短语">
      </div>
      <nav class="tabs">
        <a href="#">默认</a><a href="#" class="on">插入</a><a href="#">注释</a><a href="#">布局</a><a href="#">参数化</a><a href="#">视图</a><a href="#">管理</a><a href="#">输出</a><a href="#">插件</a><a href="#" class="latin">Autodesk 360</a><a href="#">精选应用</a><a href="#">天正建筑</a>
        <button class="fold" aria-label="最小化功能区"><span></span></button><span class="caret light"></span>
      </nav>
    </div>
  </header>

  <div class="ribbon">
    <section class="panel">
      <div class="body">
        <button class="big"><svg><use href="#rInsert"/></svg>插入</button>
        <button class="big wide"><svg><use href="#rTagPen"/></svg>编辑<br>属性<span class="caret small"></span></button>
      </div>
      <h2>块<span class="caret"></span></h2>
    </section>
    <section class="panel">
      <div class="body">
        <button class="big wide"><svg><use href="#block"/></svg>创建<br>块<span class="caret small"></span></button>
        <button class="big"><svg><use href="#tag"/></svg>定义<br>属性</button>
        <button class="big"><svg><use href="#rManage"/></svg>管理<br>属性</button>
        <button class="big mid"><svg><use href="#rEditor"/></svg>块<br>编辑器</button>
      </div>
      <h2>块定义<span class="caret"></span></h2>
    </section>
    <section class="panel ref">
      <div class="body">
        <button class="big"><svg><use href="#rAttach"/></svg>附着</button>
        <button class="big"><svg><use href="#rCrop"/></svg>剪裁</button>
        <button class="big"><svg><use href="#rAdjust"/></svg>调整</button>
        <div class="rows">
          <button><svg class="i"><use href="#sUnder"/></svg>参考底图图层</button>
          <button><svg class="i"><use href="#sFrame"/></svg>*边框可变选项*<span class="caret small"></span></button>
          <button><svg class="i"><use href="#sSnap"/></svg><span>打开“捕捉到参考底图”功能</span><span class="caret small"></span></button>
        </div>
      </div>
      <h2>参照<span class="caret"></span><svg class="launch" viewBox="0 0 6 6"><path d="M0 0l5 5M5 1v4H1" fill="none" stroke="#444"/></svg></h2>
    </section>
    <section class="panel cloud">
      <div class="body">
        <button class="big"><svg><use href="#rCloud"/></svg>创建<br>点云</button>
        <div class="rows">
          <button><svg class="i"><use href="#sCloudA"/></svg>附着</button>
          <button><svg class="i"><use href="#sCloudU"/></svg>自动更新</button>
        </div>
      </div>
      <h2>点云<span class="caret"></span></h2>
    </section>
    <section class="panel">
      <div class="body"><button class="big"><svg><use href="#rImport"/></svg>输入</button></div>
      <h2>输入</h2>
    </section>
    <section class="panel data">
      <div class="body">
        <button class="big"><svg><use href="#rField"/></svg>字段</button>
        <div class="rows">
          <button><svg class="i"><use href="#sUpd"/></svg>更新字段</button>
          <button><svg class="i"><use href="#sOle"/></svg>OLE 对象</button>
          <button><svg class="i"><use href="#sHyper"/></svg>超链接</button>
        </div>
      </div>
      <h2>数据</h2>
    </section>
    <section class="panel last">
      <div class="body"><button class="big"><svg><use href="#rLink"/></svg>数据<br>链接</button></div>
      <h2></h2>
    </section>
  </div>

  <main class="work">
    <aside class="palette">
      <h2><span class="grip"></span>T20天正建筑软件 V4.0</h2>
      <ul class="menu first">
        <li><span class="tri"></span>设　　置</li>
        <li><span class="tri down"></span>轴网柱子</li>
      </ul>
      <ul class="menu sub">
        <li><svg class="i"><use href="#grid"/></svg>绘制轴网</li>
        <li><svg class="i"><use href="#wallgen"/></svg>墙生轴网</li>
        <li><svg class="i"><use href="#addline"/></svg>添加轴线</li>
        <li><svg class="i"><use href="#trim"/></svg>轴线裁剪</li>
        <li><svg class="i"><use href="#merge"/></svg>轴网合并</li>
        <li><svg class="i"><use href="#ltype"/></svg>轴改线型</li>
      </ul>
      <ul class="menu sub">
        <li><svg class="i"><use href="#axes2"/></svg>轴网标注</li>
        <li><svg class="i"><use href="#axis1"/></svg>单轴标注</li>
        <li><svg class="i"><use href="#axplus"/></svg>添补轴号</li>
        <li><svg class="i"><use href="#axminus"/></svg>删除轴号</li>
        <li><svg class="i"><use href="#ax4"/></svg>一轴多号</li>
        <li><svg class="i"><use href="#axhide"/></svg>轴号隐现</li>
        <li><svg class="i"><use href="#axswap"/></svg>主附转换</li>
      </ul>
      <ul class="menu sub">
        <li><svg class="i"><use href="#cross"/></svg>标 准 柱</li>
        <li class="hot"><svg class="i"><use href="#corner"/></svg>角　　柱</li>
        <li><svg class="i"><use href="#corner2"/></svg>构 造 柱</li>
        <li><svg class="i"><use href="#walledge"/></svg>柱齐墙边</li>
      </ul>
      <ul class="menu rest">
        <li><span class="tri"></span>墙　　体</li>
        <li><span class="tri"></span>门　　窗</li>
        <li><span class="tri"></span>房间屋顶</li>
        <li><span class="tri"></span>楼梯其他</li>
        <li><span class="tri"></span>立　　面</li>
        <li><span class="tri"></span>剖　　面</li>
        <li><span class="tri"></span>文字表格</li>
        <li><span class="tri"></span>尺寸标注</li>
        <li><span class="tri"></span>符号标注</li>
        <li><span class="tri"></span>图层控制</li>
        <li><span class="tri"></span>工　　具</li>
        <li><span class="tri"></span>图块图案</li>
        <li><span class="tri"></span>建筑防火</li>
        <li><span class="tri"></span>场地布置</li>
      </ul>
    </aside>

    <div class="canvas">
      <svg class="drawing" aria-hidden="true">
        <g transform="translate(-204 -156)" shape-rendering="crispEdges" fill="none">
          <path class="axis" d="M442.500 165V793M534.500 165V793M616.500 165V793M669.500 244V793M701.500 165V700M812.500 244V793M844.500 165V700M860.500 244V793M891.500 165V768M755 218.500H1600M534 266.500H1600M770 323.500H1600M468 349.500H1600M389 424.500H1600M389 488.500H1600M389 561.500H1600M389 624.500H1600M389 703.500H1600"/>
          <path class="col" d="M426.500 202.500h32v32h-32zM518.500 202.500h32v32h-32zM600.500 202.500h32v32h-32zM518.500 250.500h32v32h-32zM600.500 250.500h32v32h-32zM518.500 333.500h32v31h-32zM600.500 333.500h32v31h-32z"/>
          <g id="colrow" class="col"><path d="M426.500 408.500h32v32h-32zM518.500 408.500h32v32h-32zM600.500 408.500h32v32h-32zM653.500 408.500h32v32h-32zM796.500 408.500h64v32h-64zM828.500 408.500v32M876.500 408.500h32v32h-32z"/></g>
          <use href="#colrow" y="64"/><use href="#colrow" y="137"/><use href="#colrow" y="200"/>
          <path class="col" d="M426.500 687.500h32v32h-32zM518.500 687.500h32v32h-32zM600.500 687.500h32v32h-32zM426.500 777.500h32v32h-32z"/>
          <path class="cursor" d="M208.500 401V498M204 449.500H257"/>
          <path d="M222 779V793" stroke="#fff" stroke-width="2"/>
          <path d="M223.500 762.500l6 6 6-6M229.500 768v7" stroke="#ddd"/>
        </g>
      </svg>
      <p class="view">[−][俯视][二维线框]</p>
      <div class="bars">
        <div class="bar" role="toolbar" aria-label="图层"><span class="grab"></span>
          <button><svg><use href="#layers"/></svg></button><button><svg><use href="#layerswap"/></svg></button><i></i><button><svg><use href="#bulb"/></svg></button><button><svg><use href="#bulbsq"/></svg></button><button><svg><use href="#bulby"/></svg></button><button><svg><use href="#bulblay"/></svg></button><button><svg><use href="#snow"/></svg></button><button><svg><use href="#snowsq"/></svg></button><button><svg><use href="#sun"/></svg></button><button><svg><use href="#lock"/></svg></button><button><svg><use href="#locksq"/></svg></button><button><svg><use href="#unlock"/></svg></button><button><svg><use href="#layleft"/></svg></button><button><svg><use href="#laydown"/></svg></button><button><svg><use href="#laypen"/></svg></button>
          <button class="close">x</button></div>
        <div class="bar" role="toolbar" aria-label="常用编辑"><span class="grab"></span>
          <button><svg><use href="#handpage"/></svg></button><button><svg><use href="#pagemag"/></svg></button><i></i><button><svg><use href="#win"/></svg></button><button><svg><use href="#winx"/></svg></button><i></i><button><svg><use href="#poly"/></svg></button><button><svg><use href="#wallf"/></svg></button><button><svg><use href="#arrA"/></svg></button><button><svg><use href="#ladder"/></svg></button><button><svg><use href="#Aarr"/></svg></button><button><svg><use href="#ins"/></svg></button><button><svg><use href="#level"/></svg></button><button><svg><use href="#AB"/></svg></button><i></i><button><svg><use href="#sheet"/></svg></button><button><svg><use href="#wave"/></svg></button><button><svg><use href="#arch"/></svg></button><button><svg><use href="#door"/></svg></button><i></i><button><svg><use href="#eyered"/></svg></button><button><svg><use href="#note"/></svg></button><button><svg><use href="#eye"/></svg></button><i></i><button><svg><use href="#grid4"/></svg></button><button><svg><use href="#pagedot"/></svg></button><button><svg><use href="#ruler"/></svg></button>
          <button class="close">x</button></div>
        <div class="bar" role="toolbar" aria-label="对齐"><span class="grab"></span>
          <button><svg><use href="#ov1"/></svg></button><button><svg><use href="#ov2"/></svg></button><button><svg><use href="#ov3"/></svg></button><button><svg><use href="#ov4"/></svg></button><i></i><button><svg><use href="#alL"/></svg></button><button><svg><use href="#alR"/></svg></button><button><svg><use href="#alC"/></svg></button><i></i><button><svg><use href="#alT"/></svg></button><button><svg><use href="#alB"/></svg></button><button><svg><use href="#alM"/></svg></button><i></i><button><svg><use href="#list"/></svg></button><button><svg><use href="#dist"/></svg></button><button><svg><use href="#slash"/></svg></button>
          <button class="close">x</button></div>
        <div class="bar tight" role="toolbar" aria-label="常用绘图"><span class="grab"></span>
          <button><svg><use href="#setup"/></svg></button><button><svg><use href="#edit"/></svg></button><button><svg><use href="#layers"/></svg></button><button><svg><use href="#grid"/></svg></button><button><svg><use href="#axes2"/></svg></button><button><svg><use href="#axis1"/></svg></button><button><svg><use href="#cross"/></svg></button><button><svg><use href="#dim"/></svg></button><button><svg><use href="#wall"/></svg></button><button><svg><use href="#arc"/></svg></button><button><svg><use href="#m2"/></svg></button><button><svg><use href="#m2t"/></svg></button><button><svg><use href="#win"/></svg></button><button><svg><use href="#portal"/></svg></button><button><svg><use href="#tee"/></svg></button><button><svg><use href="#mail"/></svg></button><button><svg><use href="#house"/></svg></button><button><svg><use href="#brush"/></svg></button><button><svg><use href="#book"/></svg></button><button><svg><use href="#table"/></svg></button><button><svg><use href="#level"/></svg></button><button><svg><use href="#ladder"/></svg></button><button><svg><use href="#Aarr"/></svg></button><button><svg><use href="#wheel"/></svg></button><button><svg><use href="#help"/></svg></button>
          <button class="close">x</button></div>
        <div class="bar" role="toolbar" aria-label="轴网标注"><span class="grab"></span>
          <button><svg><use href="#grid"/></svg></button><button><svg><use href="#axes2"/></svg></button><button><svg><use href="#axminus"/></svg></button><button><svg><use href="#onearr"/></svg></button><i></i><button><svg><use href="#wdown"/></svg></button><button><svg><use href="#dim"/></svg></button><button><svg><use href="#Lwall"/></svg></button><button><svg><use href="#colarr"/></svg></button><button><svg><use href="#arc"/></svg></button><button><svg><use href="#cross"/></svg></button><i></i><button><svg><use href="#zibr"/></svg></button><button><svg><use href="#zi"/></svg></button><button><svg><use href="#zil"/></svg></button><i></i><button><svg><use href="#d1"/></svg></button><button><svg><use href="#d2"/></svg></button><button><svg><use href="#d3"/></svg></button><button><svg><use href="#clock"/></svg></button><button><svg><use href="#angle"/></svg></button><button><svg><use href="#redo2"/></svg></button><i></i><button><svg><use href="#copies"/></svg></button><button><svg><use href="#mover"/></svg></button><button><svg><use href="#move"/></svg></button><button><svg><use href="#paste"/></svg></button>
          <button class="close">x</button></div>
      </div>
      <div class="mark">
        <svg class="deer"><use href="#deer"/></svg>
        <div><strong>3D溜溜网</strong><span>3D66.COM</span></div>
      </div>
    </div>
  </main>
</div>
</body>
</html>
```
FILE: styles.css
```css
* { box-sizing: border-box; }

body {
  margin: 0;
  height: 100vh;
  overflow: hidden;
  font: 12px/18px "Open Sans", "Noto Sans CJK SC", sans-serif;
  color: #222;
  background: #d3e7f8;
}

button, input, select { font: inherit; color: inherit; margin: 0; padding: 0; border: 0; background: none; }
h1, h2, p, ul { margin: 0; padding: 0; font: inherit; }
a { color: inherit; text-decoration: none; }
.sprite { position: absolute; width: 0; height: 0; }
.i { width: 16px; height: 16px; flex: none; display: block; }
symbol text { font-family: "Liberation Sans", "Noto Sans CJK SC", sans-serif; fill: #111; }
symbol .inv { fill: #fff; font-weight: 700; }
symbol .blue { fill: #1a62a8; }

.caret {
  display: inline-block;
  flex: none;
  border: 4px solid transparent;
  border-top-color: #3a3a3a;
  border-bottom: 0;
}
.caret.small { border-width: 3px 3px 0; }
.caret.dim { border-width: 3px 3px 0; border-top-color: #444; }
.caret.light { border-width: 3px 3px 0; border-top-color: #e6e6e6; }

.window {
  height: 100%;
  margin-left: 2px;
  padding-left: 5px;
  display: flex;
  flex-direction: column;
  border-left: 1px solid #eef6fd;
  box-shadow: -1px 0 #66707a;
}

/* title bar and tabs */
.top { display: flex; flex: none; background: linear-gradient(#cfe4f6, #f4f9fd 29px, #404040 29px); }
.app {
  width: 41px;
  height: 41px;
  margin-top: 6px;
  flex: none;
  display: flex;
  align-items: center;
  justify-content: center;
  gap: 3px;
  border: 1px solid #111;
  background: linear-gradient(#b9b9b9, #6c6c6c);
}
.logo { width: 24px; height: 26px; }
.topmain { flex: 1; min-width: 0; }
.titlebar { display: flex; height: 29px; padding-top: 6px; }
.quick {
  width: 198px;
  flex: none;
  display: flex;
  align-items: center;
  padding-left: 10px;
  gap: 8px;
  background: linear-gradient(#a2a2a2, #646464);
  border-top: 1px solid #555;
}
.quick button { width: 16px; height: 16px; }
.quick svg { width: 16px; height: 16px; display: block; }
.workspace {
  width: 179px;
  flex: none;
  display: flex;
  align-items: center;
  gap: 4px;
  padding: 0 4px 0 2px;
  border: 1px solid #777;
  background: linear-gradient(#d2d2d2, #ababab);
  color: #606060;
}
.workspace select { flex: 1; appearance: none; }
.qmore { width: 17px; flex: none; background: linear-gradient(#8c8c8c, #444); border: 1px solid #444; }
.qmore .caret { border-top-color: #000; }
.doc {
  flex: 1;
  min-width: 0;
  padding: 0 0 5px 14px;
  line-height: 16px;
  color: #111;
  white-space: nowrap;
  overflow: hidden;
}
.expand { width: 14px; flex: none; background: linear-gradient(#8c8c8c, #4d4d4d); }
.expand span { display: inline-block; border: 4px solid transparent; border-left: 5px solid #000; border-right: 0; }
.search {
  width: 102px;
  flex: none;
  padding-left: 3px;
  background: linear-gradient(#d4d4d4, #f2f2f2);
  border: 1px solid #777;
  border-right: 0;
  font-style: italic;
}
.search::placeholder { color: #666; opacity: 1; }

.tabs { display: flex; height: 21px; align-items: center; padding-left: 4px; color: #eee; white-space: nowrap; }
.tabs a { padding: 3px 10px 0; height: 18px; line-height: 16px; align-self: flex-end; }
.tabs .on { background: linear-gradient(#cacaca, #fff); color: #222; border-radius: 2px 2px 0 0; }
.tabs .latin { width: 100px; font-family: "DejaVu Sans", sans-serif; }
.fold { width: 13px; height: 8px; margin: 0 5px 0 22px; background: #e8e8e8; border-radius: 2px; display: flex; align-items: center; justify-content: center; }
.fold span { border: 3px solid transparent; border-bottom-color: #333; border-top: 0; }

/* ribbon */
.ribbon { display: flex; flex: none; height: 99px; padding-left: 2px; background: #fdfdfd; border-bottom: 1px solid #d0d0d0; overflow: hidden; }
.panel { flex: none; display: flex; flex-direction: column; border-right: 1px solid #9a9a9a; }
.body { flex: 1; display: flex; padding: 7px 2px 0; }
.panel h2 {
  position: relative;
  height: 18px;
  margin-left: 1px;
  display: flex;
  align-items: center;
  justify-content: center;
  gap: 7px;
  background: #ececec;
  border-top: 1px solid #d5d5d5;
  color: #444;
}
.launch { position: absolute; right: 4px; bottom: 5px; width: 6px; height: 6px; }
.big { position: relative; width: 38px; line-height: 17px; display: block; text-align: center; align-self: flex-start; white-space: nowrap; color: #333; }
.big svg { display: block; width: 32px; height: 32px; margin: 0 auto 4px; }
.wide { width: 46px; }
.mid { width: 42px; }
.big .caret { position: absolute; right: 2px; bottom: 14px; }
.rows { padding-left: 5px; white-space: nowrap; color: #333; }
.rows button { display: flex; align-items: center; gap: 5px; height: 24px; padding-bottom: 4px; }
.rows .caret { margin-left: 3px; }
.ref { width: 317px; }
.cloud { width: 122px; }
.data { width: 125px; }
.last { flex: 1; border-right: 0; }

/* work area */
.work { flex: 1; min-height: 0; display: flex; padding-top: 7px; background: #676767; }
.palette { width: 190px; flex: none; background: #9b9b9b; border-radius: 4px 4px 0 0; overflow: hidden; }
.palette h2 { display: flex; align-items: center; gap: 8px; height: 22px; padding-left: 2px; color: #111; }
.grip { width: 3px; height: 12px; background: repeating-linear-gradient(#333 0 1px, #9b9b9b 1px 2px); }
.menu { list-style: none; background: #efefeb; color: #111; }
.menu li { display: flex; align-items: center; height: 18px; gap: 9px; padding-left: 3px; white-space: nowrap; }
.first { padding-top: 7px; background: #f0f0f0; border-radius: 4px 4px 0 0; }
.sub { padding: 3px 0 2px; border-top: 1px solid #8d8d8d; }
.first + .sub { border-top-width: 2px; }
.rest { padding: 1px 0; background: #f0f0f0; border-top: 1px solid #fff; }
.hot { background: #ffffa6; border-bottom: 1px solid #a8a878; }
.tri { width: 16px; display: flex; padding-left: 5px; }
.tri::before { content: ""; border: 4px solid transparent; border-left: 5px solid #33659a; border-right: 0; }
.tri.down { padding-left: 3px; }
.tri.down::before { border: 5px solid transparent; border-top-color: #33659a; border-bottom: 0; }

.canvas {
  position: relative;
  flex: 1;
  min-width: 0;
  margin: -1px 0 0 4px;
  border-left: 2px solid #8c8c8c;
  border-top: 1px solid #8c8c8c;
  background: #000;
  overflow: hidden;
}
.drawing { position: absolute; inset: 0; width: 100%; height: 100%; }
.axis { stroke: #e01212; }
.col { stroke: #cfcfcf; }
.cursor { stroke: #fff; }
.view { position: relative; padding: 4px 0 0 3px; height: 27px; line-height: 20px; color: #e6e6e6; }

/* floating toolbars */
.bars { position: relative; display: flex; flex-direction: column; align-items: flex-start; gap: 7px; }
.bar { display: flex; flex: none; height: 23px; background: #ececec; border-top: 1px solid #fafafa; }
.bar.tight { margin-top: -3px; }
.bar button { width: 23px; height: 22px; display: flex; align-items: center; justify-content: center; flex: none; }
.bar svg { width: 16px; height: 16px; display: block; }
.bar i { width: 4px; flex: none; border-left: 1px solid #555; margin: 2px 0 2px 2px; }
.grab { width: 8px; flex: none; background: radial-gradient(circle, #333 1px, #777 1px) 0 0 / 3px 3px; }
.bar .close { width: 9px; background: #5b5b5b; color: #fff; font-weight: 700; line-height: 10px; align-items: flex-start; }

.mark {
  position: absolute;
  right: 44px;
  bottom: 17px;
  width: 169px;
  height: 87px;
  padding: 0 6px 6px;
  display: flex;
  align-items: center;
  gap: 5px;
  background: #233258;
  color: #d9d9d9;
}
.deer { width: 40px; height: 52px; flex: none; fill: #d9d9d9; }
.mark div { display: flex; flex-direction: column; white-space: nowrap; }
.mark strong { font: 500 26px/34px "Noto Sans CJK SC", sans-serif; }
.mark span { font: 20px/22px "DejaVu Sans", sans-serif; }
```
